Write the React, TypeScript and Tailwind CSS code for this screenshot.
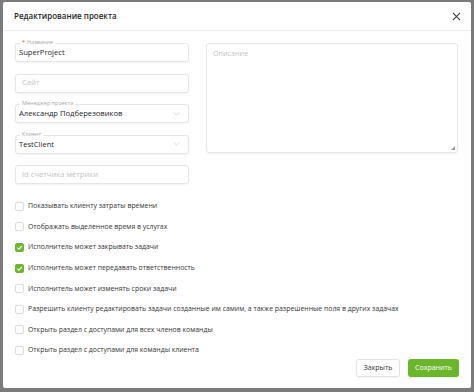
const checks = [
  { label: "Показывать клиенту затраты времени", checked: false },
  { label: "Отображать выделенное время в услугах", checked: false },
  { label: "Исполнитель может закрывать задачи", checked: true },
  { label: "Исполнитель может передавать ответственность", checked: true },
  { label: "Исполнитель может изменять сроки задачи", checked: false },
  {
    label:
      "Разрешить клиенту редактировать задачи созданные им самим, а также разрешенные поля в других задачах",
    checked: false,
  },
  { label: "Открыть раздел с доступами для всех членов команды", checked: false },
  { label: "Открыть раздел с доступами для команды клиента", checked: false },
];

function Field({
  label,
  required,
  value,
  placeholder,
  select,
}: {
  label?: string;
  required?: boolean;
  value?: string;
  placeholder?: string;
  select?: boolean;
}) {
  return (
    <div className="relative">
      {label && (
        <span className="absolute -top-[4px] left-[5px] z-10 bg-white px-[2px] text-[5.5px] leading-[7px] text-[#a8a8a8]">
          {required && <span className="mr-[2px] text-[#ef4444]">*</span>}
          {label}
        </span>
      )}
      <div
        className={`flex h-[19px] items-center rounded-[3px] border border-[#e6e6e6] bg-white pr-[5px] shadow-[0_1px_2px_rgba(0,0,0,0.05)] ${
          value ? "pl-[3px]" : "pl-[6px]"
        }`}
      >
        <span
          className={`flex-1 truncate text-[7.6px] ${
            value ? "font-medium text-[#262626]" : "text-[#c4c4c4]"
          }`}
        >
          {value ?? placeholder}
        </span>
        {select && (
          <svg width="7" height="4" viewBox="0 0 8 5" className="mr-[3px]">
            <path d="M0.5 0.5 L4 4 L7.5 0.5" fill="none" stroke="#c8c8c8" strokeWidth="0.9" />
          </svg>
        )}
      </div>
    </div>
  );
}

export default function App() {
  return (
    <div
      className="h-[392px] w-[474px] overflow-hidden bg-[#7b7b7b] pb-[4px] pl-[3px] pr-[3px] pt-[2px]"
      style={{ fontFamily: '"Open Sans", "Liberation Sans", sans-serif' }}
    >
      <div className="flex h-[386px] flex-col rounded-[2px] bg-white">
        <header className="flex h-[29px] items-center justify-between border-b border-[#efefef] pl-[11px] pr-[10px]">
          <h1 className="text-[8px] font-semibold text-[#262626]">
            Редактирование проекта
          </h1>
          <svg width="9" height="9" viewBox="0 0 10 10">
            <path d="M1 1 L9 9 M9 1 L1 9" stroke="#3a3a3a" strokeWidth="1.2" />
          </svg>
        </header>

        <div className="flex gap-[17px] pl-[12px] pr-[13px] pt-[12px]">
          <div className="flex w-[174px] flex-col gap-[11.6px]">
            <Field label="Название" required value="SuperProject" />
            <Field placeholder="Сайт" />
            <Field label="Менеджер проекта" value="Александр Подберезовиков" select />
            <Field label="Клиент" value="TestClient" select />
            <Field placeholder="Id счетчика метрики" />
          </div>
          <div className="relative h-[110px] flex-1 rounded-[3px] border border-[#e6e6e6] px-[6px] py-[4px] shadow-[0_1px_2px_rgba(0,0,0,0.05)]">
            <span className="block text-[7.2px] text-[#c4c4c4]">Описание</span>
            <svg
              width="4"
              height="4"
              viewBox="0 0 5 5"
              className="absolute bottom-[2px] right-[2px]"
            >
              <path d="M5 0 L5 5 L0 5 Z" fill="#9a9a9a" />
            </svg>
          </div>
        </div>

        <div className="mt-[17.5px] flex flex-col gap-[11.6px] pl-[12px]">
          {checks.map((item) => (
            <label key={item.label} className="flex h-[9px] items-center gap-[4px]">
              <span
                className={`flex h-[9px] w-[9px] items-center justify-center rounded-[2px] border ${
                  item.checked
                    ? "border-[#6cb52d] bg-[#6cb52d]"
                    : "border-[#dcdcdc] bg-white"
                }`}
              >
                {item.checked && (
                  <svg width="7" height="7" viewBox="0 0 7 7">
                    <path
                      d="M1.2 3.6 L2.9 5.2 L5.9 1.8"
                      fill="none"
                      stroke="white"
                      strokeWidth="1.2"
                    />
                  </svg>
                )}
              </span>
              <span className="whitespace-nowrap text-[6.9px] font-medium text-[#333]">
                {item.label}
              </span>
            </label>
          ))}
        </div>

        <div className="mt-auto flex justify-end gap-[8px] pb-[11px] pr-[12px]">
          <button className="h-[18px] w-[44px] rounded-[3px] border border-[#e3e3e3] bg-white text-[7px] font-medium text-[#333] shadow-[0_1px_2px_rgba(0,0,0,0.06)]">
            Закрыть
          </button>
          <button className="h-[18px] w-[51px] rounded-[3px] bg-[#6cb52d] text-[7px] font-medium text-white shadow-[0_1px_2px_rgba(0,0,0,0.1)]">
            Сохранить
          </button>
        </div>
      </div>
    </div>
  );
}
